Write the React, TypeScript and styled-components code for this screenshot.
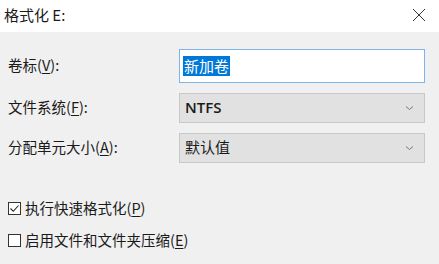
import styled, { createGlobalStyle } from "styled-components";

const GlobalStyle = createGlobalStyle`
  html, body {
    margin: 0;
    padding: 0;
    background: #f0f0f0;
  }
  * {
    box-sizing: border-box;
  }
`;

const Window = styled.div`
  width: 439px;
  height: 264px;
  display: flex;
  flex-direction: column;
  font-family: "Noto Sans CJK SC", "Noto Sans", sans-serif;
  color: #1a1a1a;
  background: #f0f0f0;
  overflow: hidden;
`;

const TitleBar = styled.div`
  height: 32px;
  flex: none;
  display: flex;
  align-items: center;
  justify-content: space-between;
  padding: 0 10px 0 4px;
  background: #ffffff;
`;

const Title = styled.div`
  font-size: 15px;
  line-height: 20px;
  margin-top: -2px;
`;

const CloseButton = styled.div`
  width: 20px;
  height: 20px;
  display: flex;
  align-items: center;
  justify-content: center;
  margin-top: -2px;
`;

const Body = styled.div`
  flex: 1;
  padding: 17px 14px 0 8px;
  display: flex;
  flex-direction: column;
`;

const Form = styled.div`
  display: grid;
  grid-template-columns: 171px 246px;
  row-gap: 10px;
  align-items: center;
`;

const Label = styled.div`
  font-size: 14.5px;
  line-height: 20px;
  margin-top: -2px;
`;

const Key = styled.span`
  text-decoration: underline;
  text-underline-offset: 2px;
`;

const TextField = styled.div`
  height: 34px;
  border: 1px solid #7eb4ea;
  background: #ffffff;
  display: flex;
  align-items: center;
  padding-left: 3px;
`;

const Selected = styled.span`
  background: #0078d7;
  color: #ffffff;
  font-size: 15px;
  line-height: 20px;
  padding: 0 1px;
`;

const Select = styled.div`
  height: 30px;
  border: 1px solid #c8c8c8;
  background: #e1e1e1;
  display: flex;
  align-items: center;
  justify-content: space-between;
  padding: 0 10px 0 5px;
  font-size: 15px;
`;

const Value = styled.span<{ $latin?: boolean }>`
  font-family: ${(p) =>
    p.$latin
      ? `"Open Sans", "Noto Sans", sans-serif`
      : `"Noto Sans CJK SC", sans-serif`};
  font-weight: ${(p) => (p.$latin ? 600 : 400)};
  line-height: 20px;
  margin-top: -2px;
`;

const Options = styled.div`
  margin-top: 35px;
  display: flex;
  flex-direction: column;
  gap: 12px;
`;

const CheckRow = styled.div`
  display: flex;
  align-items: center;
  gap: 4px;
  font-size: 14.5px;
  line-height: 20px;
  height: 20px;
`;

const Box = styled.div`
  width: 13px;
  height: 13px;
  border: 1px solid #333;
  background: #ffffff;
  display: flex;
  align-items: center;
  justify-content: center;
  margin-top: 1px;
`;

const Chevron = () => (
  <svg width="9" height="6" viewBox="0 0 9 6">
    <path d="M1 1.5 L4.5 4.5 L8 1.5" fill="none" stroke="#777" strokeWidth="1" />
  </svg>
);

function App() {
  return (
    <Window>
      <GlobalStyle />
      <TitleBar>
        <Title>格式化 E:</Title>
        <CloseButton>
          <svg width="14" height="14" viewBox="0 0 14 14">
            <path d="M1 1 L13 13 M13 1 L1 13" stroke="#333" strokeWidth="1" />
          </svg>
        </CloseButton>
      </TitleBar>
      <Body>
        <Form>
          <Label>
            卷标(<Key>V</Key>):
          </Label>
          <TextField>
            <Selected>新加卷</Selected>
          </TextField>
          <Label>
            文件系统(<Key>F</Key>):
          </Label>
          <Select>
            <Value $latin>NTFS</Value>
            <Chevron />
          </Select>
          <Label>
            分配单元大小(<Key>A</Key>):
          </Label>
          <Select>
            <Value>默认值</Value>
            <Chevron />
          </Select>
        </Form>
        <Options>
          <CheckRow>
            <Box>
              <svg width="11" height="11" viewBox="0 0 11 11">
                <path d="M1.5 5.5 L4.3 8.3 L9.5 2.5" fill="none" stroke="#222" strokeWidth="1.1" />
              </svg>
            </Box>
            <span>
              执行快速格式化(<Key>P</Key>)
            </span>
          </CheckRow>
          <CheckRow>
            <Box />
            <span>
              启用文件和文件夹压缩(<Key>E</Key>)
            </span>
          </CheckRow>
        </Options>
      </Body>
    </Window>
  );
}

export default App;
